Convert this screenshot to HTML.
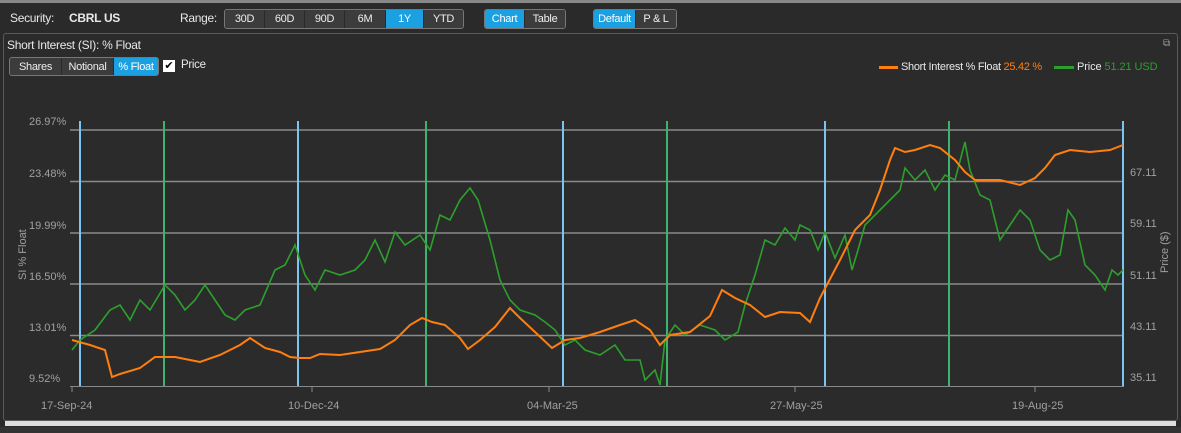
<!DOCTYPE html>
<html><head><style>
*{margin:0;padding:0;box-sizing:border-box}
body{width:1181px;height:433px;background:#2a2a2a;font-family:"Liberation Sans",sans-serif;color:#e8e8e8;font-size:12px;position:relative;overflow:hidden}
.a{position:absolute;white-space:nowrap}
.grp{position:absolute;top:9px;height:20px;border:1px solid #777;border-radius:3px;display:flex;background:#3a3a3a;overflow:hidden}
.grp div{flex:none;text-align:center;line-height:18px;font-size:11px;letter-spacing:-0.3px;color:#eee;border-right:1px solid #2a2a2a;background:#3c3c3c;white-space:nowrap}
.grp div.on{background:#1ba1e2;color:#fff}
</style></head><body>
<div class="a" style="left:0;top:0;width:1181px;height:3px;background:#888"></div>
<div class="a" style="left:10px;top:11px;font-size:12px;letter-spacing:-0.3px">Security:</div>
<div class="a" style="left:69px;top:11px;font-size:12px;font-weight:bold;letter-spacing:-0.3px">CBRL US</div>
<div class="a" style="left:180px;top:11px;font-size:12px;letter-spacing:-0.3px">Range:</div>
<div class="grp" style="left:224px;width:240px"><div style="width:40px">30D</div><div style="width:40px">60D</div><div style="width:40px">90D</div><div style="width:41px">6M</div><div class="on" style="width:38px">1Y</div><div style="width:39px;border:none">YTD</div></div>
<div class="grp" style="left:484px;width:82px"><div class="on" style="width:40px">Chart</div><div style="width:40px;border:none">Table</div></div>
<div class="grp" style="left:593px;width:84px"><div class="on" style="width:42px">Default</div><div style="width:40px;border:none">P &amp; L</div></div>
<div class="a" style="left:3px;top:33px;width:1175px;height:388px;border:1px solid #5a5a5a;border-radius:3px;background:#2b2b2b"></div>
<div class="a" style="left:7px;top:38px;font-size:12px;letter-spacing:-0.3px">Short Interest (SI): % Float</div>
<div class="a" style="left:1163px;top:38px;font-size:10px;color:#999">⧉</div>
<div class="grp" style="left:9px;top:57px;width:150px;height:19px"><div style="width:52px">Shares</div><div style="width:52px">Notional</div><div class="on" style="width:44px;border:none">% Float</div></div>
<div class="a" style="left:163px;top:60px;width:12px;height:12px;background:#fff;color:#000;font-size:11px;line-height:12px;text-align:center">✔</div>
<div class="a" style="left:181px;top:59px;font-size:11.5px;letter-spacing:-0.3px">Price</div>
<div class="a" style="left:879px;top:66px;width:19px;height:3px;background:#ff7f0e"></div>
<div class="a" style="left:901px;top:61px;font-size:11px;letter-spacing:-0.3px">Short Interest % Float <span style="color:#ff7f0e">25.42 %</span></div>
<div class="a" style="left:1054px;top:66px;width:20px;height:3px;background:#2ca02c"></div>
<div class="a" style="left:1077px;top:61px;font-size:11px;letter-spacing:-0.1px">Price <span style="color:#2ca02c">51.21 USD</span></div>
<svg class="a" style="left:0;top:0" width="1181" height="433">
<g stroke="#8a8a8a" stroke-width="1.5"><line x1="70" y1="130" x2="1124" y2="130"/><line x1="70" y1="181.5" x2="1124" y2="181.5"/><line x1="70" y1="233" x2="1124" y2="233"/><line x1="70" y1="284" x2="1124" y2="284"/><line x1="70" y1="335.5" x2="1124" y2="335.5"/></g>
<g stroke="#888" stroke-width="1"><line x1="70" y1="386.5" x2="1124" y2="386.5"/><line x1="72" y1="386" x2="72" y2="392"/><line x1="312" y1="386" x2="312" y2="392"/><line x1="549" y1="386" x2="549" y2="392"/><line x1="795" y1="386" x2="795" y2="392"/><line x1="1035" y1="386" x2="1035" y2="392"/></g>
<g stroke="#7cc4f2" stroke-width="2"><line x1="80" y1="121" x2="80" y2="386"/><line x1="298" y1="121" x2="298" y2="386"/><line x1="563" y1="121" x2="563" y2="386"/><line x1="825" y1="121" x2="825" y2="386"/><line x1="1123" y1="121" x2="1123" y2="386"/></g>
<g stroke="#3cb46e" stroke-width="2"><line x1="164" y1="121" x2="164" y2="386"/><line x1="426" y1="121" x2="426" y2="386"/><line x1="667" y1="121" x2="667" y2="386"/><line x1="949" y1="121" x2="949" y2="386"/></g>
<polyline fill="none" stroke="#2ca02c" stroke-width="1.6" points="72,350 80,340 95,330 110,310 120,305 130,320 140,300 150,310 165,285 175,295 185,310 195,300 205,285 215,300 225,315 235,320 245,310 260,305 275,270 285,265 295,245 305,275 315,290 325,270 340,275 355,270 365,260 375,240 385,262 395,232 405,245 420,235 430,250 440,215 450,220 460,200 470,188 478,200 490,240 500,280 510,300 520,310 535,315 545,322 555,330 565,345 575,340 585,350 600,355 615,345 625,360 640,360 645,380 655,370 660,385 665,340 675,325 685,335 700,325 715,330 725,340 738,332 745,305 755,275 765,240 775,245 785,228 795,240 800,225 810,230 818,250 825,232 835,258 845,235 852,270 858,250 865,225 880,210 890,200 900,190 905,168 915,180 925,170 935,190 945,175 955,180 965,142 970,170 980,195 990,200 1000,240 1010,225 1020,210 1030,220 1040,250 1050,260 1060,255 1068,210 1075,220 1085,265 1095,275 1105,290 1112,270 1118,275 1123,270"/>
<polyline fill="none" stroke="#ff7f0e" stroke-width="2" points="72,340 90,345 105,350 112,377 120,374 140,368 155,357 175,357 200,362 220,355 240,345 250,338 265,348 280,352 290,357 300,358 310,358 320,354 340,355 360,352 380,349 395,340 410,325 422,318 432,322 445,325 460,338 468,349 480,340 495,327 510,308 520,318 535,332 552,348 565,340 580,338 600,332 620,325 635,320 650,330 660,345 670,335 690,332 710,316 722,290 735,298 750,305 765,317 780,312 800,313 810,322 820,298 840,260 855,230 870,215 880,190 890,160 895,148 905,152 915,150 930,145 940,148 955,160 965,172 975,180 985,180 1000,180 1020,185 1035,178 1045,168 1055,155 1070,150 1090,152 1110,150 1123,145"/>
<g fill="#a0a0a0" font-size="11" font-family="Liberation Sans, sans-serif">
<text x="29" y="125">26.97%</text><text x="29" y="177">23.48%</text><text x="29" y="229">19.99%</text><text x="29" y="280">16.50%</text><text x="29" y="331">13.01%</text><text x="29" y="382">9.52%</text>
<text x="1130" y="176">67.11</text><text x="1130" y="227">59.11</text><text x="1130" y="279">51.11</text><text x="1130" y="330">43.11</text><text x="1130" y="381">35.11</text>
<text x="41" y="409">17-Sep-24</text><text x="288" y="409">10-Dec-24</text><text x="527" y="409">04-Mar-25</text><text x="770" y="409">27-May-25</text><text x="1012" y="409">19-Aug-25</text>
<text transform="translate(26,280) rotate(-90)">SI % Float</text>
<text transform="translate(1168,273) rotate(-90)">Price ($)</text>
</g>
<rect x="5" y="421" width="1171" height="5" fill="#ddd"/>
<rect x="0" y="427" width="1181" height="6" fill="#333"/>
</svg>
</body></html>
